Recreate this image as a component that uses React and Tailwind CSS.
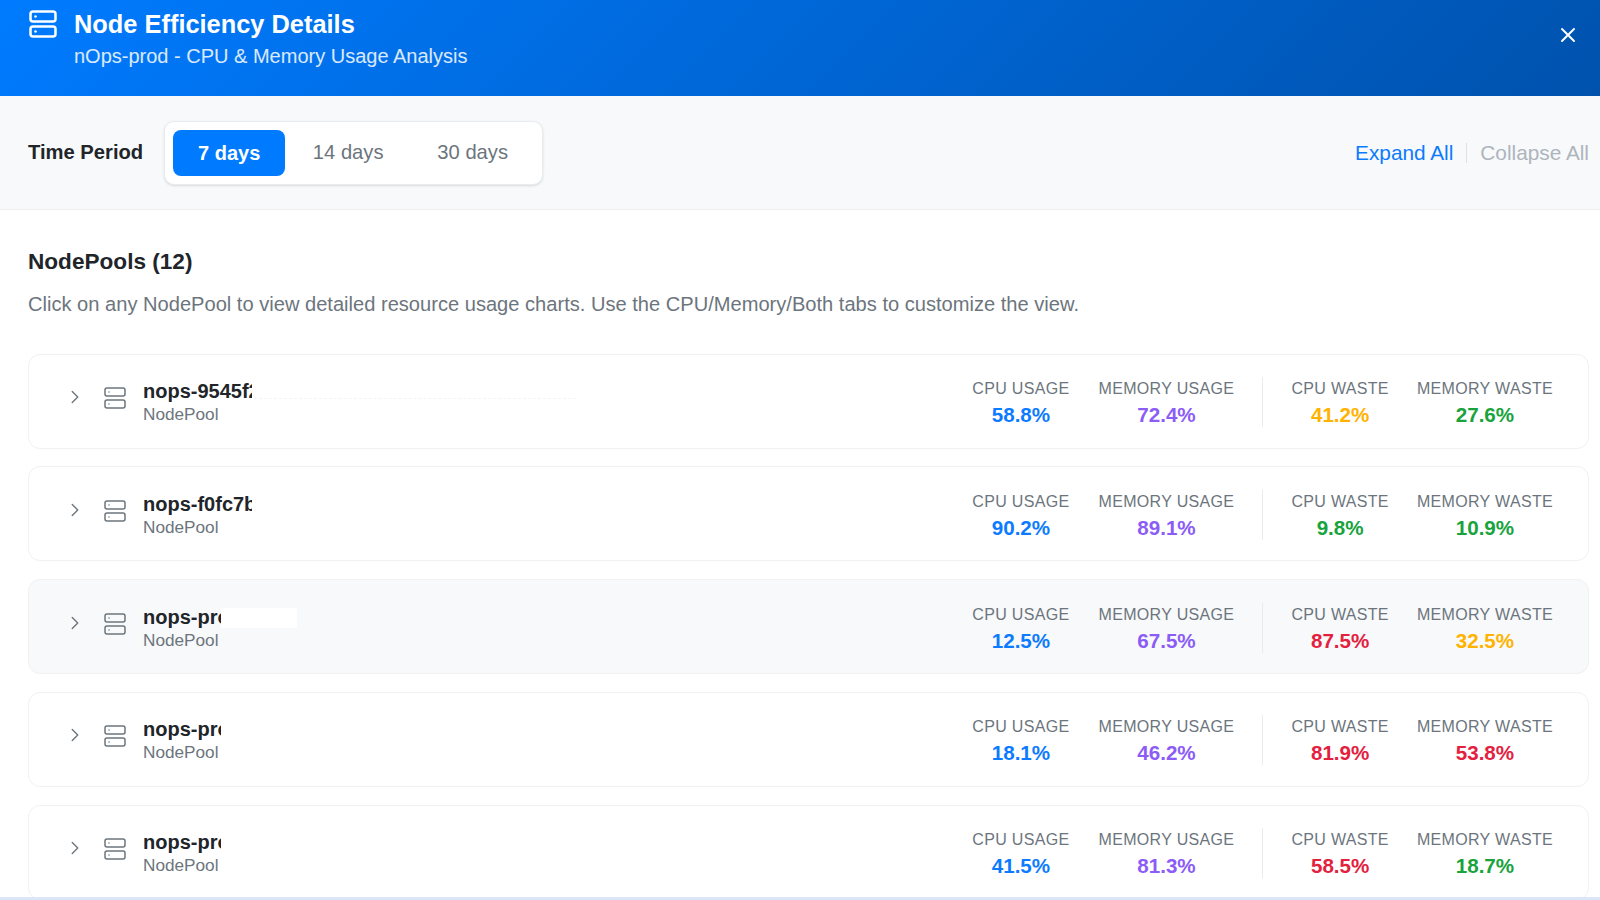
import { Server, X, ChevronRight } from 'lucide-react';

const levelColor = {
  blue: 'text-[#0d7bff]',
  purple: 'text-[#8b5cf6]',
  amber: 'text-[#ffb300]',
  green: 'text-[#18a33c]',
  red: 'text-[#e3213f]',
};

const pools = [
  { name: 'nops-9545f2', clip: 'w-[109px]', cpu: '58.8%', mem: '72.4%', cpuWaste: ['41.2%', 'amber'], memWaste: ['27.6%', 'green'], dashed: true },
  { name: 'nops-f0fc7b', clip: 'w-[109px]', cpu: '90.2%', mem: '89.1%', cpuWaste: ['9.8%', 'green'], memWaste: ['10.9%', 'green'] },
  { name: 'nops-prod-a', clip: 'w-[78px]', cpu: '12.5%', mem: '67.5%', cpuWaste: ['87.5%', 'red'], memWaste: ['32.5%', 'amber'], hovered: true },
  { name: 'nops-prod-b', clip: 'w-[78px]', cpu: '18.1%', mem: '46.2%', cpuWaste: ['81.9%', 'red'], memWaste: ['53.8%', 'red'] },
  { name: 'nops-prod-c', clip: 'w-[78px]', cpu: '41.5%', mem: '81.3%', cpuWaste: ['58.5%', 'red'], memWaste: ['18.7%', 'green'] },
];

const Metric = ({ label, value, color }) => (
  <div className="flex flex-col items-center pt-[3px]">
    <span className="text-[16px] leading-[20px] font-medium uppercase tracking-[0.33px] text-[#6c757d] whitespace-nowrap">{label}</span>
    <span className={`mt-[3px] text-[20.6px] leading-[26px] font-semibold ${levelColor[color]}`}>{value}</span>
  </div>
);

const PoolCard = ({ pool }) => (
  <div className={`relative shrink-0 h-[95px] pt-[2px] flex items-center justify-between pl-[35px] pr-[35px] rounded-[12px] border border-[#f0f1f3] ${pool.hovered ? 'bg-[#f8f9fa]' : 'bg-white'}`}>
    <div className="flex items-center">
      <ChevronRight className="w-[22px] h-[22px] mb-[10px] text-[#6c757d]" strokeWidth={1.5} />
      <Server className="w-[24px] h-[24px] ml-[17px] mb-[8px] text-[#6c757d]" strokeWidth={1.5} />
      <div className="ml-[16px]">
        <div className={`overflow-hidden whitespace-nowrap text-[20px] leading-[24px] font-semibold text-[#212529] ${pool.clip}`}>{pool.name}</div>
        <div className="text-[17.2px] leading-[22px] text-[#6c757d]">NodePool</div>
      </div>
    </div>

    {/* redacted part of the name */}
    {pool.hovered && <div className="absolute left-[192px] top-[28px] w-[76px] h-[20px] bg-white" />}
    {pool.dashed && <div className="absolute left-[225px] top-[43px] w-[322px] border-t border-dashed border-[#f3f4f6]" />}

    <div className="flex items-center">
      <div className="flex items-center gap-[29px]">
        <Metric label="CPU Usage" value={pool.cpu} color="blue" />
        <Metric label="Memory Usage" value={pool.mem} color="purple" />
      </div>
      <div className="w-px h-[50px] ml-[28px] mr-[28px] bg-[#e9ecef]" />
      <div className="flex items-center gap-[28px]">
        <Metric label="CPU Waste" value={pool.cpuWaste[0]} color={pool.cpuWaste[1]} />
        <Metric label="Memory Waste" value={pool.memWaste[0]} color={pool.memWaste[1]} />
      </div>
    </div>
  </div>
);

const App = () => {
  return (
    <div className="w-full h-[900px] flex flex-col overflow-hidden bg-white font-['Liberation_Sans',Arial,sans-serif]">
      {/* Header */}
      <header className="shrink-0 h-[96px] flex items-start justify-between pl-[28px] pr-[20px] bg-[linear-gradient(135deg,#007bff,#0052ad)] text-white">
        <div className="flex items-start">
          <Server className="w-[30px] h-[30px] mt-[9px]" strokeWidth={2} />
          <div className="ml-[16px]">
            <h1 className="mt-[6px] text-[25.4px] leading-[36px] font-semibold">Node Efficiency Details</h1>
            <p className="text-[20px] leading-[28px] text-white/85">nOps-prod - CPU &amp; Memory Usage Analysis</p>
          </div>
        </div>
        <X className="w-[24px] h-[24px] mt-[23px]" strokeWidth={2} />
      </header>

      {/* Time period */}
      <div className="shrink-0 h-[114px] flex items-center justify-between pl-[28px] pr-[11px] bg-[#f8f9fa] border-b border-[#eef0f2]">
        <div className="flex items-center">
          <span className="text-[20.2px] font-semibold text-[#212529]">Time Period</span>
          <div className="ml-[21px] flex items-center p-[8px] bg-white border border-[#e9ecef] rounded-[10px] shadow-sm">
            <button className="w-[112px] h-[46px] rounded-[8px] bg-[#007bff] text-white text-[20px] font-semibold">7 days</button>
            <button className="w-[126px] h-[46px] text-[#6c757d] text-[20.2px] font-medium">14 days</button>
            <button className="w-[123px] h-[46px] text-[#6c757d] text-[20.2px] font-medium">30 days</button>
          </div>
        </div>
        <div className="flex items-center text-[20.8px] font-medium">
          <span className="text-[#0d7bff]">Expand All</span>
          <span className="w-px h-[20px] mx-[13px] bg-[#dee2e6]" />
          <span className="text-[#adb5bd]">Collapse All</span>
        </div>
      </div>

      {/* NodePools */}
      <main className="flex-1 min-h-0 overflow-hidden pl-[28px] pr-[11px] pt-[36px]">
        <h2 className="text-[22.6px] leading-[32px] font-semibold text-[#212529]">NodePools (12)</h2>
        <p className="mt-[10px] text-[20.1px] leading-[32px] text-[#6c757d]">Click on any NodePool to view detailed resource usage charts. Use the CPU/Memory/Both tabs to customize the view.</p>
        <div className="mt-[33.5px] flex flex-col gap-[17.8px]">
          {pools.map(p => <PoolCard key={p.name} pool={p} />)}
        </div>
      </main>
      <div className="shrink-0 h-[3px] bg-[#dbe7f8]" />
    </div>
  );
};

export default App;
